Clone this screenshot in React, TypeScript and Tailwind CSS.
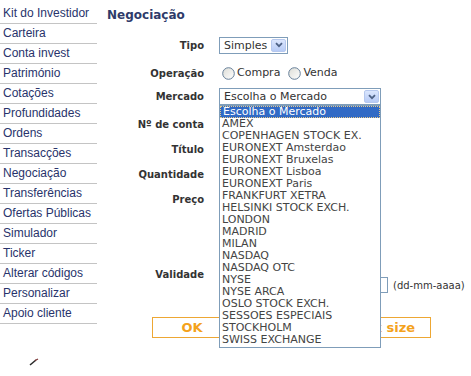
const menu = [
  "Kit do Investidor",
  "Carteira",
  "Conta invest",
  "Património",
  "Cotações",
  "Profundidades",
  "Ordens",
  "Transacções",
  "Negociação",
  "Transferências",
  "Ofertas Públicas",
  "Simulador",
  "Ticker",
  "Alterar códigos",
  "Personalizar",
  "Apoio cliente",
]

const mercados = [
  "Escolha o Mercado",
  "AMEX",
  "COPENHAGEN STOCK EX.",
  "EURONEXT Amsterdao",
  "EURONEXT Bruxelas",
  "EURONEXT Lisboa",
  "EURONEXT Paris",
  "FRANKFURT XETRA",
  "HELSINKI STOCK EXCH.",
  "LONDON",
  "MADRID",
  "MILAN",
  "NASDAQ",
  "NASDAQ OTC",
  "NYSE",
  "NYSE ARCA",
  "OSLO STOCK EXCH.",
  "SESSOES ESPECIAIS",
  "STOCKHOLM",
  "SWISS EXCHANGE",
]

function Arrow() {
  return (
    <span className="absolute right-[1px] top-[1px] flex h-[13px] w-[15px] items-center justify-center rounded-[2px] border border-[#b6c8ee] bg-gradient-to-b from-[#dbe6fd] to-[#b7cbf6]">
      <svg width="8" height="6" viewBox="0 0 8 6">
        <path d="M1 1.2 L4 4.2 L7 1.2" fill="none" stroke="#4d6185" strokeWidth="1.8" />
      </svg>
    </span>
  )
}

function Radio({ label }: { label: string }) {
  return (
    <span className="flex items-center">
      <svg width="13" height="13" viewBox="0 0 13 13" className="mr-[2px]">
        <defs>
          <linearGradient id="rg" x1="0" y1="0" x2="1" y2="1">
            <stop offset="0" stopColor="#dcdcd6" />
            <stop offset="1" stopColor="#ffffff" />
          </linearGradient>
        </defs>
        <circle cx="6.5" cy="6.5" r="5.8" fill="url(#rg)" stroke="#667f99" strokeWidth="1" />
      </svg>
      <span>{label}</span>
    </span>
  )
}

function Row({ label, h, children }: { label: string; h: string; children?: React.ReactNode }) {
  return (
    <div className={`flex items-center ${h}`}>
      <div className="w-[97px] text-right text-[10px] font-bold text-[#333333]">{label}</div>
      <div className="ml-[15px] flex items-center">{children}</div>
    </div>
  )
}

export default function App() {
  return (
    <div className="flex h-[376px] w-[471px] overflow-hidden bg-white font-['DejaVu_Sans',Verdana,sans-serif]">
      <aside className="w-[97px] shrink-0 pt-[4px] font-['Liberation_Sans',Arial,sans-serif] text-[12px] text-[#28336b]">
        {menu.map((m) => (
          <div key={m} className="flex h-[20px] items-center border-b border-[#c4c4c4] pb-[1px] pl-[3px]">
            {m}
          </div>
        ))}
        <div className="ml-[29px] mt-[34px]">
          <svg width="10" height="8" viewBox="0 0 10 8">
            <path d="M1 7 L7 2" stroke="#2a2a2a" strokeWidth="1.6" />
            <path d="M6 2.5 L9 1" stroke="#7a3030" strokeWidth="1.2" />
          </svg>
        </div>
      </aside>

      <main className="relative pl-[10px] text-[11px] text-[#333333]">
        <h1 className="mt-[6px] h-[18px] text-[12px] font-bold leading-[18px] text-[#2e3b6a]">Negociação</h1>

        <div className="mt-[8px]">
          <Row label="Tipo" h="h-[26px]">
            <div className="relative h-[17px] w-[69px] border border-[#7f9db9] bg-white pl-[4px] leading-[15px]">
              Simples
              <Arrow />
            </div>
          </Row>
          <Row label="Operação" h="h-[30px]">
            <div className="flex items-center gap-[8px] pl-[3px]">
              <Radio label="Compra" />
              <Radio label="Venda" />
            </div>
          </Row>
          <div className="flex h-[24px] items-start">
            <div className="flex h-[17px] w-[97px] items-center justify-end text-[10px] font-bold">Mercado</div>
            <div className="relative ml-[15px] h-[17px] w-[162px] border border-[#7f9db9] bg-white pl-[4px] leading-[15px]">
              Escolha o Mercado
              <Arrow />
              <ul className="absolute left-[-1px] top-[16px] z-10 w-[162px] border border-[#7f9db9] bg-white pb-[1px] text-[#444444]">
                {mercados.map((m, i) => (
                  <li
                    key={m}
                    className={`h-[12px] overflow-hidden pl-[2px] ${
                      i === 0
                        ? "border border-dotted border-[#e6c88a] bg-[#316ac5] pl-[1px] leading-[10px] text-white"
                        : "leading-[12px]"
                    }`}
                  >
                    {m}
                  </li>
                ))}
              </ul>
            </div>
          </div>
          <Row label="Nº de conta" h="h-[25px]" />
          <Row label="Título" h="h-[25px]" />
          <Row label="Quantidade" h="h-[25px]" />
          <Row label="Preço" h="h-[24px]" />
          <div className="h-[41px]" />
          <div className="flex h-[44px] items-center">
            <div className="w-[97px] text-right text-[10px] font-bold">Validade</div>
            <div className="ml-[15px] flex flex-col">
              <div className="h-[22px]" />
              <div className="flex items-center">
                <div className="ml-[89px] h-[16px] w-[80px] border border-[#7f9db9] bg-white" />
                <span className="ml-[5px] text-[10px]">(dd-mm-aaaa)</span>
              </div>
            </div>
          </div>

          <div className="mt-[21px] flex">
            <button className="ml-[45px] h-[21px] w-[80px] border border-[#eda734] bg-white text-[13px] font-bold text-[#f4a21c]">
              OK
            </button>
            <button className="ml-[90px] h-[21px] w-[109px] border border-[#eda734] bg-white text-[13px] font-bold text-[#f4a21c]">
              Check size
            </button>
          </div>
        </div>
      </main>
    </div>
  )
}
